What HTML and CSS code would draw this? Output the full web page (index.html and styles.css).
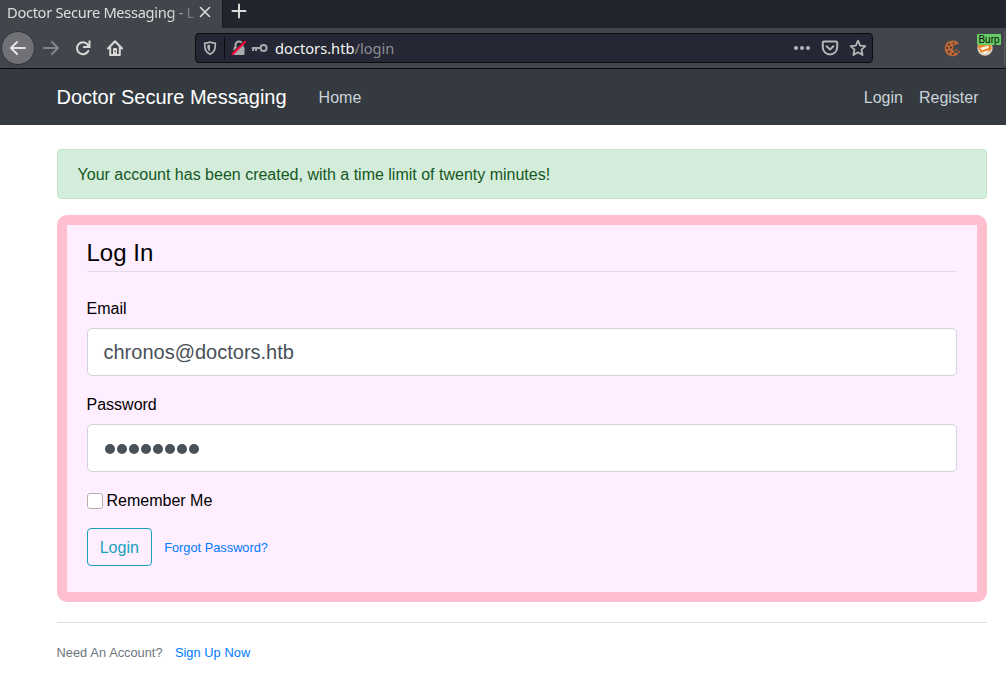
FILE: index.html
```html
<!DOCTYPE html>
<html lang="en">
<head>
<meta charset="utf-8">
<title>Doctor Secure Messaging - Login</title>
<link rel="stylesheet" href="styles.css">
</head>
<body>
<div class="tabstrip">
  <div class="tab">
    <span class="tab-title">Doctor Secure Messaging - L</span>
    <svg class="tab-close" width="12" height="12" viewBox="0 0 12 12"><path d="M1.500 1.500l9 9M10.500 1.500l-9 9" fill="none" stroke="#d9d9d6" stroke-width="1.600" stroke-linecap="round"/></svg>
  </div>
  <div class="new-tab"><svg width="16" height="16" viewBox="0 0 16 16"><path d="M8 1.500v13M1.500 8h13" fill="none" stroke="#d9d9d6" stroke-width="2" stroke-linecap="round"/></svg></div>
</div>
<div class="toolbar">
  <div class="nav-buttons">
    <span class="back"><svg width="16" height="16" viewBox="0 0 16 16"><path d="M15 8H1.700M7 2L1 8l6 6" fill="none" stroke="#e4e4e1" stroke-width="2" stroke-linecap="round" stroke-linejoin="round"/></svg></span>
    <svg width="16" height="16" viewBox="0 0 16 16"><path d="M1 8h13.300M9 2l6 6-6 6" fill="none" stroke="#83858a" stroke-width="2" stroke-linecap="round" stroke-linejoin="round"/></svg>
    <svg width="16" height="16" viewBox="0 0 16 16"><path d="M13.300 11A6 6 0 1 1 12.600 4.300" fill="none" stroke="#d9d9d6" stroke-width="2" stroke-linecap="round"/><path d="M14.500 1.200V7H8.800" fill="none" stroke="#d9d9d6" stroke-width="2" stroke-linecap="round"/><path d="M14.500 3v4H10.500z" fill="#d9d9d6"/></svg>
    <svg width="16" height="16" viewBox="0 0 16 16"><path d="M1 8.500L8 1.300l7 7.200M3.200 7.500v7.500h9.600V7.500" fill="none" stroke="#d9d9d6" stroke-width="2" stroke-linecap="round" stroke-linejoin="round"/><path d="M6 15.500V9q0-1 1-1h2q1 0 1 1v6.500z" fill="#d9d9d6"/><path d="M7.500 10.500h1.300v1.700H7.500z" fill="#42454b"/></svg>
  </div>
  <div class="urlbar">
    <span class="shield"><svg width="14" height="14" viewBox="0 0 14 14"><path d="M7 1C5.500 1.800 3.600 2.100 1.700 2.200 1.600 7.500 2.200 11 7 13.100 11.800 11 12.400 7.500 12.300 2.200 10.400 2.100 8.500 1.800 7 1z" fill="none" stroke="#b2b3b5" stroke-width="1.700" stroke-linejoin="round"/><path d="M7 3.500v7C4.800 9.200 4.200 7.700 4.200 4.200 5.300 4.100 6.300 3.900 7 3.500z" fill="#b2b3b5"/></svg></span>
    <svg class="lock" width="16" height="16" viewBox="0 0 16 16"><path d="M4.500 7V5a3.500 3.500 0 0 1 7 0v2" fill="none" stroke="#a9aaac" stroke-width="2"/><rect x="2.500" y="7" width="11" height="8" rx="1" fill="#a9aaac"/><path d="M.8 13.400L13.400 .8" stroke="#252734" stroke-width="1.200"/><path d="M1.500 14.300L14.200 1.700" stroke="#ff0039" stroke-width="2" stroke-linecap="round"/></svg>
    <svg class="key" width="17" height="10" viewBox="0 0 17 10"><circle cx="12.600" cy="5" r="3" fill="none" stroke="#a9aaac" stroke-width="2"/><path d="M9.800 5H.8M2 5v3M5 5v3" fill="none" stroke="#a9aaac" stroke-width="2"/></svg>
    <span class="url">doctors.htb<span class="path">/login</span></span>
    <span class="page-actions">
      <svg width="18" height="18" viewBox="0 0 18 18" fill="#b5b6b8"><circle cx="3" cy="9" r="2"/><circle cx="9" cy="9" r="2"/><circle cx="15" cy="9" r="2"/></svg>
      <svg width="18" height="18" viewBox="0 0 18 18" fill="none" stroke="#b5b6b8" stroke-width="2" stroke-linecap="round" stroke-linejoin="round"><path d="M3 2.500h12q1.200 0 1.200 1.200V8.300a7.200 7.200 0 0 1-14.400 0V3.700Q1.800 2.500 3 2.500z"/><path d="M5.600 7.200L9 10.400l3.400-3.200"/></svg>
      <svg width="18" height="18" viewBox="0 0 18 18" fill="none" stroke="#b5b6b8" stroke-width="1.800" stroke-linejoin="round"><path d="M9 1.700l2.200 4.900 5.200.6-3.900 3.500 1.100 5.300L9 13.300 4.400 16l1.100-5.300L1.600 7.200l5.200-.6z"/></svg>
    </span>
  </div>
  <div class="extensions">
    <svg width="17" height="17" viewBox="0 0 17 17"><path d="M9.500.6C4 .2.700 4 .7 8.300c0 4.600 3.300 8 7.800 8 2.600 0 4.600-1 5.900-2.600l-1.600-1.200-1.900.4-.9-2.300-1.500-.5 1-2.600-.4-2 2.300-.4L13 4.500l2-1.200C13.500 1.500 11.500.8 9.500.6z" fill="#b8693b"/><path d="M11.500 9h2v1.800h-2zM14 11h2v1.500h-2z" fill="#b8693b"/><g fill="#542b1b"><circle cx="5" cy="4.500" r="1"/><circle cx="9.500" cy="3.200" r=".9"/><circle cx="3" cy="8" r="1"/><circle cx="6.800" cy="7.500" r="1"/><circle cx="5" cy="11.800" r="1.100"/><circle cx="9" cy="13.700" r="1"/></g></svg>
    <span class="proxy">
      <svg width="16" height="16" viewBox="0 0 16 16"><circle cx="8" cy="8" r="7.700" fill="#ddd2c0"/><path d="M.8 6.500L4 3l10 .2.500 5.800-3.500 3.200-7 .6z" fill="#e8842c"/><path d="M3 8l8-2.500 1 2.200L5 10.500z" fill="#fff2dc"/><path d="M4.800 12.500l6-2 1.200.8-4 2.400z" fill="#fff"/></svg>
      <span class="badge">Burp</span>
    </span>
    <span class="divider"></span>
  </div>
</div>
<header class="site-nav">
  <span class="brand">Doctor Secure Messaging</span>
  <a class="nav-link">Home</a>
  <nav class="nav-right"><a class="nav-link">Login</a><a class="nav-link">Register</a></nav>
</header>
<main class="container">
  <div class="alert">Your account has been created, with a time limit of twenty minutes!</div>
  <section class="content">
    <h1 class="legend">Log In</h1>
    <label class="label">Email</label>
    <div class="field">chronos@doctors.htb</div>
    <label class="label">Password</label>
    <div class="field dots"><i></i><i></i><i></i><i></i><i></i><i></i><i></i><i></i></div>
    <div class="remember"><span class="check"></span><span class="remember-text">Remember Me</span></div>
    <div class="actions"><span class="button">Login</span><a class="link">Forgot Password?</a></div>
  </section>
  <footer class="signup">Need An Account?<a class="link">Sign Up Now</a></footer>
</main>
</body>
</html>
```
FILE: styles.css
```css
* { box-sizing: border-box; }
body { margin: 0; width: 1006px; height: 678px; overflow: hidden; background: #fff; color: #000; font: 16px/24px "Liberation Sans", Arial, sans-serif; }
svg { display: block; flex: none; }
.tabstrip { display: flex; height: 28px; background: #22252e; font-family: "Noto Sans", sans-serif; }
.tab { display: flex; align-items: center; width: 222px; height: 28px; padding: 0 0 4px 7px; background: #42454b; }
.tab-title { width: 187px; white-space: nowrap; font-size: 14.67px; letter-spacing: -0.32px; line-height: 24px; color: #dededb; -webkit-mask-image: linear-gradient(to right, #000 162px, transparent 194px); mask-image: linear-gradient(to right, #000 162px, transparent 194px); }
.tab-close { margin-left: 5px; }
.new-tab { height: 28px; width: 34px; border-left: 1px solid #15171d; padding: 3px 0 0 8px; }
.toolbar { display: flex; align-items: center; height: 41px; background: #42454b; border-bottom: 1px solid #0c0c0d; }
.nav-buttons { display: flex; align-items: center; gap: 16px; width: 195px; padding-left: 1px; }
.nav-buttons .back { display: flex; align-items: center; justify-content: center; width: 34px; height: 34px; margin-right: -8px; border: 1px solid #303238; border-radius: 50%; background: #707176; }
.urlbar { display: flex; align-items: center; width: 678px; height: 30px; border: 1px solid #0c0c0d; border-radius: 4px; background: #252734; font-family: "Noto Sans", sans-serif; }
.shield { display: flex; align-items: center; width: 29px; height: 22px; padding-left: 7px; border-right: 1px solid #0c0c0d; }
.lock { margin-left: 6px; }
.key { margin-left: 4px; }
.url { margin-left: 7px; font-size: 14.67px; color: #f4f4f1; white-space: nowrap; }
.path { color: #8d8e93; }
.page-actions { display: flex; gap: 10px; margin-left: auto; padding-right: 5px; }
.extensions { display: flex; align-items: center; flex: 1; padding-left: 71px; }
.proxy { position: relative; margin-left: 16px; }
.badge { position: absolute; left: 0; top: -6px; width: 24px; height: 11px; border-radius: 1px; background: #66cc66; color: #0c0c0d; font-size: 10px; line-height: 12px; text-align: center; }
.divider { width: 1px; height: 34px; margin-left: auto; margin-right: 1px; background: #5b5d63; }
.site-nav { display: flex; align-items: center; height: 56px; padding: 0 27.5px 0 56.5px; background: #343a40; }
.brand { margin-right: 32px; font-size: 20px; line-height: 30px; color: #fff; }
.nav-link { padding-top: 2px; color: #cbd3da; }
.nav-right { display: flex; gap: 16px; margin-left: auto; }
.container { padding: 24px 19px 0 57px; }
.alert { height: 50px; padding: 13px 20px 11px 19.6px; border: 1px solid #c3e6cb; border-radius: 4px; background: #d4edda; color: #155724; }
.content { margin-top: 16px; padding: 10px 20px; border: 10px solid #ffbfce; border-radius: 10px; background: #ffeeff; }
.legend { margin: 0 0 24px; height: 37px; border-bottom: 1px solid #e1dbec; font-size: 24px; font-weight: 400; line-height: 36px; text-indent: -0.5px; }
.label { display: block; padding-top: 1px; margin-bottom: 7px; text-indent: -0.5px; }
.field { height: 48px; margin-bottom: 16px; padding: 8px 15.5px; border: 1px solid #ced4da; border-radius: 5px; background: #fff; color: #495057; font-size: 20px; line-height: 30px; }
.dots { display: flex; align-items: center; gap: 2px; padding: 2px 16.5px 0; }
.dots i { width: 10px; height: 10px; border-radius: 50%; background: #495057; }
.remember { display: flex; align-items: center; height: 24px; margin-bottom: 16px; }
.remember-text { padding-top: 2px; }
.check { width: 16px; height: 16px; margin: 2px 3.5px 0 0; border: 1px solid #b5b1ab; border-radius: 3px; background: #fff; }
.actions { display: flex; align-items: center; margin-bottom: 16px; }
.button { height: 38px; padding: 7px 12.3px 5px 11.7px; border: 1px solid #17a2b8; border-radius: 4px; color: #17a2b8; }
.link { margin-left: 12px; font-size: 12.8px; color: #007bff; }
.actions .link { padding-top: 2px; }
.signup { margin-top: 20px; padding-top: 18px; border-top: 1px solid #dfe0e7; font-size: 12.8px; color: #6c757d; text-indent: -0.4px; word-spacing: 0.3px; }
.signup .link { margin-left: 12.4px; }
```
